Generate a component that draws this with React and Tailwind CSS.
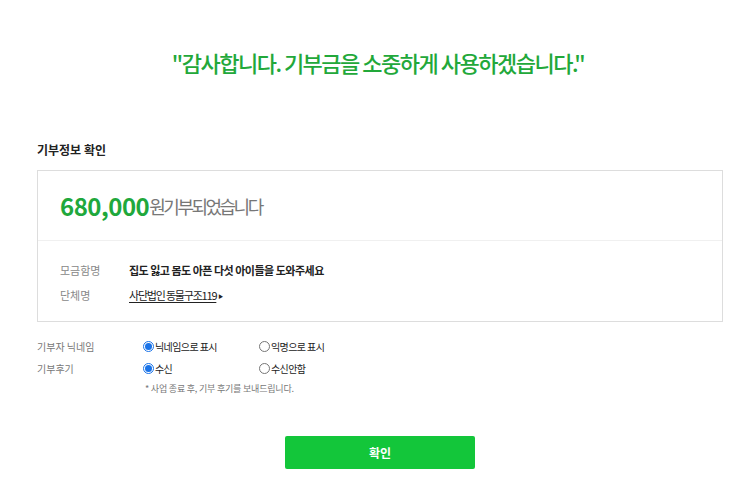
import React, { useState } from 'react';

const Radio = ({ checked, label, onClick }) => (
  <button type="button" onClick={onClick} className="flex items-center gap-[1px] text-[10px] text-[#222]">
    <span
      className={`flex h-[11px] w-[11px] items-center justify-center rounded-full border ${
        checked ? 'border-[#1a73e8]' : 'border-[#767676]'
      }`}
    >
      {checked && <span className="h-[7px] w-[7px] rounded-full bg-[#1a73e8]" />}
    </span>
    <span className="tracking-[-0.6px]">{label}</span>
  </button>
);

const App = () => {
  const [nickname, setNickname] = useState('nick');
  const [review, setReview] = useState('yes');

  return (
    <div className="h-[503px] w-[756px] bg-white font-['Noto_Sans_CJK_KR','Noto_Sans',sans-serif]">
      <h1 className="pt-[44px] text-center text-[22px] leading-[36px] font-medium tracking-[-1.5px] text-[#22a83a]">
        "감사합니다. 기부금을 소중하게 사용하겠습니다."
      </h1>

      <div className="ml-[37px] w-[686px] pt-[61px]">
        <h2 className="text-[12px] leading-[18px] font-bold text-[#222]">기부정보 확인</h2>

        {/* donation summary box */}
        <div className="mt-[11px] h-[152px] border border-[#dddddd]">
          <div className="flex h-[70px] items-center border-b border-[#f0f0f0] pl-[22px]">
            <span className="text-[24px] leading-none font-bold tracking-[-0.5px] text-[#1fa83c]">680,000</span>
            <span className="text-[18px] leading-none tracking-[-2.5px] text-[#777]">원기부되었습니다</span>
          </div>
          <div className="pt-[17px] pl-[22px] text-[11px]">
            <div className="flex h-[25px] items-center">
              <span className="w-[69px] text-[#888]">모금함명</span>
              <span className="font-bold tracking-[-0.5px] text-[#222]">집도 잃고 몸도 아픈 다섯 아이들을 도와주세요</span>
            </div>
            <div className="flex h-[25px] items-center">
              <span className="w-[69px] text-[#888]">단체명</span>
              <span className="tracking-[-1.2px] text-[#222] underline underline-offset-2">사단법인 동물구조119</span>
              <span className="ml-[2px] text-[5px] text-[#222]">▶</span>
            </div>
          </div>
        </div>

        {/* options */}
        <div className="mt-[13px] text-[10px] text-[#777]">
          <div className="flex h-[22px] items-center">
            <span className="w-[106px]">기부자 닉네임</span>
            <div className="w-[116px]">
              <Radio checked={nickname === 'nick'} label="닉네임으로 표시" onClick={() => setNickname('nick')} />
            </div>
            <Radio checked={nickname === 'anon'} label="익명으로 표시" onClick={() => setNickname('anon')} />
          </div>
          <div className="flex h-[22px] items-center">
            <span className="w-[106px]">기부후기</span>
            <div className="w-[116px]">
              <Radio checked={review === 'yes'} label="수신" onClick={() => setReview('yes')} />
            </div>
            <Radio checked={review === 'no'} label="수신안함" onClick={() => setReview('no')} />
          </div>
          <p className="pl-[108px] text-[9px] leading-[20px] tracking-[-0.2px] text-[#777]">* 사업 종료 후, 기부 후기를 보내드립니다.</p>
        </div>
      </div>

      <div className="mt-[37px] flex justify-center">
        <button
          type="button"
          className="ml-[4px] h-[33px] w-[190px] rounded-[2px] bg-[#13c63a] text-[12px] font-bold text-white"
        >
          확인
        </button>
      </div>
    </div>
  );
};

export default App;
